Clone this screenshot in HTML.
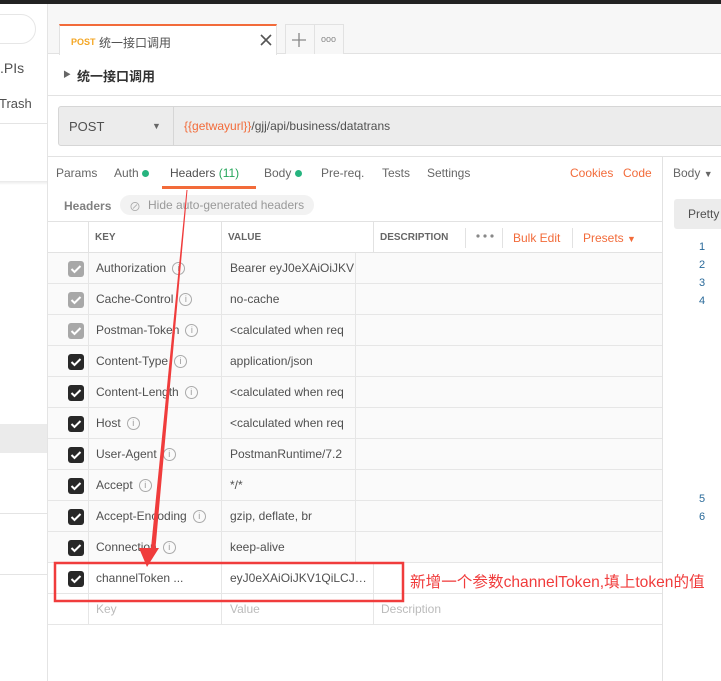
<!DOCTYPE html>
<html><head><meta charset="utf-8"><style>
*{margin:0;padding:0;box-sizing:border-box}
body{width:721px;height:681px;overflow:hidden;background:#fff;font-family:"Liberation Sans","Noto Sans CJK SC",sans-serif;font-size:12px;color:#505050;position:relative}
.a{position:absolute}
.t{position:absolute;white-space:nowrap}
.row{position:absolute;left:48px;width:614px;height:31px;border-bottom:1px solid #e6e6e6;background:#fafafa}
.cb{position:absolute;left:20px;top:8px;width:16px;height:16px;border-radius:3px;background:#282828}
.cb.g{background:#a8a8a8}
.cb svg{position:absolute;left:2px;top:3px}
.k{position:absolute;left:48px;top:8px;font-size:12px;color:#505050;white-space:nowrap}
.v{position:absolute;left:182px;top:8px;font-size:12px;color:#505050;white-space:nowrap}
.i{display:inline-block;width:13px;height:13px;border:1px solid #aaa;border-radius:50%;font-size:9px;line-height:11px;text-align:center;color:#999;vertical-align:1px;margin-left:6px}
.vl{position:absolute;top:0;width:1px;height:31px;background:#e6e6e6}
.ln{position:absolute;left:699px;color:#2a6a9a;font-size:11px}
</style></head><body>
<div class="a" style="left:0;top:0;width:721px;height:4px;background:#222"></div>
<div class="a" style="left:0;top:4px;width:47px;height:677px;background:#fff"></div>
<div class="a" style="left:47px;top:4px;width:1px;height:677px;background:#e4e4e4"></div>
<div class="a" style="left:-20px;top:14px;width:56px;height:30px;border:1px solid #e6e6e6;border-radius:15px;background:#fff"></div>
<div class="t" style="left:0;top:60px;font-size:14px;color:#505050">.PIs</div>
<div class="t" style="left:-1px;top:96px;font-size:13px;color:#505050">Trash</div>
<div class="a" style="left:0;top:123px;width:47px;height:1px;background:#e4e4e4"></div>
<div class="a" style="left:0;top:181px;width:47px;height:4px;background:linear-gradient(#e8e8e8,#fff)"></div>
<div class="a" style="left:0;top:424px;width:47px;height:29px;background:#ebebeb"></div>
<div class="a" style="left:0;top:513px;width:47px;height:1px;background:#e4e4e4"></div>
<div class="a" style="left:0;top:574px;width:47px;height:1px;background:#e4e4e4"></div>
<div class="a" style="left:48px;top:4px;width:673px;height:50px;background:#f7f7f7;border-bottom:1px solid #e2e2e2"></div>
<div class="a" style="left:59px;top:24px;width:218px;height:31px;background:#fff;border-top:2px solid #f26b3a;border-left:1px solid #e2e2e2;border-right:1px solid #e2e2e2"></div>
<div class="t" style="left:71px;top:37px;font-size:9px;font-weight:bold;color:#f4a623">POST</div>
<div class="t" style="left:99px;top:34px;font-size:12px;color:#505050">统一接口调用</div>
<svg class="a" style="left:260px;top:34px" width="12" height="12"><path d="M1 1 L11 11 M11 1 L1 11" stroke="#555" stroke-width="1.6"/></svg>
<div class="a" style="left:285px;top:24px;width:59px;height:30px;border:1px solid #e2e2e2;border-bottom:none;background:#f7f7f7"></div>
<div class="a" style="left:314px;top:24px;width:1px;height:30px;background:#e2e2e2"></div>
<svg class="a" style="left:292px;top:33px" width="14" height="14"><path d="M7 0 V14 M0 7 H14" stroke="#888" stroke-width="1.3"/></svg>
<div class="t" style="left:321px;top:34px;font-size:9px;color:#888">ooo</div>
<div class="t" style="left:63px;top:69px;font-size:8px;color:#666">▶</div>
<div class="t" style="left:77px;top:66px;font-size:13px;font-weight:bold;color:#333">统一接口调用</div>
<div class="a" style="left:48px;top:95px;width:673px;height:1px;background:#e2e2e2"></div>
<div class="a" style="left:58px;top:106px;width:670px;height:40px;background:#ececec;border:1px solid #d6d6d6;border-radius:3px"></div>
<div class="a" style="left:173px;top:107px;width:1px;height:38px;background:#d6d6d6"></div>
<div class="t" style="left:69px;top:119px;font-size:13px;color:#505050">POST</div>
<div class="t" style="left:152px;top:121px;font-size:9px;color:#666">▼</div>
<div class="t" style="left:184px;top:119px;font-size:12px;color:#505050"><span style="color:#f26b3a">{{getwayurl}}</span>/gjj/api/business/datatrans</div>
<div class="a" style="left:48px;top:156px;width:673px;height:1px;background:#e2e2e2"></div>
<div class="t" style="left:56px;top:166px;font-size:12px;color:#666">Params</div>
<div class="t" style="left:114px;top:166px;font-size:12px;color:#666">Auth <span style="display:inline-block;width:7px;height:7px;border-radius:50%;background:#26b47f"></span></div>
<div class="t" style="left:170px;top:166px;font-size:12px;color:#505050">Headers <span style="color:#26a65b">(11)</span></div>
<div class="a" style="left:162px;top:186px;width:94px;height:3px;background:#f26b3a"></div>
<div class="t" style="left:264px;top:166px;font-size:12px;color:#666">Body <span style="display:inline-block;width:7px;height:7px;border-radius:50%;background:#26b47f"></span></div>
<div class="t" style="left:321px;top:166px;font-size:12px;color:#666">Pre-req.</div>
<div class="t" style="left:382px;top:166px;font-size:12px;color:#666">Tests</div>
<div class="t" style="left:427px;top:166px;font-size:12px;color:#666">Settings</div>
<div class="t" style="left:570px;top:166px;font-size:12px;color:#f26b3a">Cookies</div>
<div class="t" style="left:623px;top:166px;font-size:12px;color:#f26b3a">Code</div>
<div class="a" style="left:662px;top:156px;width:1px;height:525px;background:#e2e2e2"></div>
<div class="t" style="left:64px;top:199px;font-size:12px;font-weight:bold;color:#808080">Headers</div>
<div class="a" style="left:120px;top:195px;width:194px;height:20px;border-radius:10px;background:#f2f2f2"></div>
<div class="t" style="left:129px;top:198px;font-size:12px;color:#aaa">⊘</div>
<div class="t" style="left:148px;top:198px;font-size:12px;color:#999">Hide auto-generated headers</div>
<div class="a" style="left:48px;top:221px;width:614px;height:32px;border-top:1px solid #e2e2e2;border-bottom:1px solid #e2e2e2;background:#fff"></div>
<div class="a" style="left:88px;top:221px;width:1px;height:32px;background:#e2e2e2"></div>
<div class="a" style="left:221px;top:221px;width:1px;height:32px;background:#e2e2e2"></div>
<div class="a" style="left:373px;top:221px;width:1px;height:32px;background:#e2e2e2"></div>
<div class="a" style="left:465px;top:228px;width:1px;height:20px;background:#e2e2e2"></div>
<div class="a" style="left:502px;top:228px;width:1px;height:20px;background:#e2e2e2"></div>
<div class="a" style="left:572px;top:228px;width:1px;height:20px;background:#e2e2e2"></div>
<div class="t" style="left:95px;top:232px;font-size:10px;font-weight:bold;color:#666">KEY</div>
<div class="t" style="left:228px;top:232px;font-size:10px;font-weight:bold;color:#666">VALUE</div>
<div class="t" style="left:380px;top:232px;font-size:10px;font-weight:bold;color:#666">DESCRIPTION</div>
<svg class="a" style="left:476px;top:234px" width="18" height="4"><circle cx="2" cy="2" r="1.6" fill="#888"/><circle cx="9" cy="2" r="1.6" fill="#888"/><circle cx="16" cy="2" r="1.6" fill="#888"/></svg>
<div class="t" style="left:513px;top:231px;font-size:12px;color:#f26b3a">Bulk Edit</div>
<div class="t" style="left:583px;top:231px;font-size:12px;color:#f26b3a">Presets <span style="font-size:9px">▼</span></div>

<div class="row" style="top:253px"><div class="cb g"><svg width="12" height="10"><path d="M1.5 5 L4.5 8 L10.5 2" stroke="#fff" stroke-width="2" fill="none"/></svg></div><div class="k">Authorization<span class="i">i</span></div><div class="v">Bearer eyJ0eXAiOiJKV</div><div class="vl" style="left:40px"></div><div class="vl" style="left:173px"></div><div class="vl" style="left:307px"></div></div>
<div class="row" style="top:284px"><div class="cb g"><svg width="12" height="10"><path d="M1.5 5 L4.5 8 L10.5 2" stroke="#fff" stroke-width="2" fill="none"/></svg></div><div class="k">Cache-Control<span class="i">i</span></div><div class="v">no-cache</div><div class="vl" style="left:40px"></div><div class="vl" style="left:173px"></div><div class="vl" style="left:307px"></div></div>
<div class="row" style="top:315px"><div class="cb g"><svg width="12" height="10"><path d="M1.5 5 L4.5 8 L10.5 2" stroke="#fff" stroke-width="2" fill="none"/></svg></div><div class="k">Postman-Token<span class="i">i</span></div><div class="v">&lt;calculated when req</div><div class="vl" style="left:40px"></div><div class="vl" style="left:173px"></div><div class="vl" style="left:307px"></div></div>
<div class="row" style="top:346px"><div class="cb"><svg width="12" height="10"><path d="M1.5 5 L4.5 8 L10.5 2" stroke="#fff" stroke-width="2" fill="none"/></svg></div><div class="k">Content-Type<span class="i">i</span></div><div class="v">application/json</div><div class="vl" style="left:40px"></div><div class="vl" style="left:173px"></div><div class="vl" style="left:307px"></div></div>
<div class="row" style="top:377px"><div class="cb"><svg width="12" height="10"><path d="M1.5 5 L4.5 8 L10.5 2" stroke="#fff" stroke-width="2" fill="none"/></svg></div><div class="k">Content-Length<span class="i">i</span></div><div class="v">&lt;calculated when req</div><div class="vl" style="left:40px"></div><div class="vl" style="left:173px"></div><div class="vl" style="left:307px"></div></div>
<div class="row" style="top:408px"><div class="cb"><svg width="12" height="10"><path d="M1.5 5 L4.5 8 L10.5 2" stroke="#fff" stroke-width="2" fill="none"/></svg></div><div class="k">Host<span class="i">i</span></div><div class="v">&lt;calculated when req</div><div class="vl" style="left:40px"></div><div class="vl" style="left:173px"></div><div class="vl" style="left:307px"></div></div>
<div class="row" style="top:439px"><div class="cb"><svg width="12" height="10"><path d="M1.5 5 L4.5 8 L10.5 2" stroke="#fff" stroke-width="2" fill="none"/></svg></div><div class="k">User-Agent<span class="i">i</span></div><div class="v">PostmanRuntime/7.2</div><div class="vl" style="left:40px"></div><div class="vl" style="left:173px"></div><div class="vl" style="left:307px"></div></div>
<div class="row" style="top:470px"><div class="cb"><svg width="12" height="10"><path d="M1.5 5 L4.5 8 L10.5 2" stroke="#fff" stroke-width="2" fill="none"/></svg></div><div class="k">Accept<span class="i">i</span></div><div class="v">*/*</div><div class="vl" style="left:40px"></div><div class="vl" style="left:173px"></div><div class="vl" style="left:307px"></div></div>
<div class="row" style="top:501px"><div class="cb"><svg width="12" height="10"><path d="M1.5 5 L4.5 8 L10.5 2" stroke="#fff" stroke-width="2" fill="none"/></svg></div><div class="k">Accept-Encoding<span class="i">i</span></div><div class="v">gzip, deflate, br</div><div class="vl" style="left:40px"></div><div class="vl" style="left:173px"></div><div class="vl" style="left:307px"></div></div>
<div class="row" style="top:532px"><div class="cb"><svg width="12" height="10"><path d="M1.5 5 L4.5 8 L10.5 2" stroke="#fff" stroke-width="2" fill="none"/></svg></div><div class="k">Connection<span class="i">i</span></div><div class="v">keep-alive</div><div class="vl" style="left:40px"></div><div class="vl" style="left:173px"></div><div class="vl" style="left:307px"></div></div>
<div class="row" style="top:563px;background:#fff"><div class="cb"><svg width="12" height="10"><path d="M1.5 5 L4.5 8 L10.5 2" stroke="#fff" stroke-width="2" fill="none"/></svg></div><div class="k">channelToken ...</div><div class="v" style="width:138px;overflow:hidden;text-overflow:ellipsis">eyJ0eXAiOiJKV1QiLCJhbGciOiJIUzI1NiJ9</div><div class="vl" style="left:40px"></div><div class="vl" style="left:173px"></div><div class="vl" style="left:325px"></div></div>
<div class="row" style="top:594px;background:#fff"><div class="k" style="color:#bbb">Key</div><div class="v" style="color:#bbb">Value</div><div class="v" style="left:333px;color:#bbb">Description</div><div class="vl" style="left:40px"></div><div class="vl" style="left:173px"></div><div class="vl" style="left:325px"></div></div>
<div class="t" style="left:673px;top:166px;font-size:12px;color:#666">Body <span style="font-size:9px">▼</span></div>
<div class="a" style="left:674px;top:199px;width:60px;height:30px;border-radius:3px;background:#ececec"></div>
<div class="t" style="left:688px;top:207px;font-size:12px;color:#505050">Pretty</div>
<div class="ln" style="top:241px">1</div><div class="ln" style="top:259px">2</div><div class="ln" style="top:277px">3</div><div class="ln" style="top:295px">4</div>
<div class="ln" style="top:493px">5</div><div class="ln" style="top:511px">6</div>
<svg class="a" style="left:0;top:0" width="721" height="681">
<polygon points="186.5,190 187.5,190 155.5,548 151,548" fill="#f03c3c"/>
<polygon points="139,548 159,548 147,567" fill="#f03c3c"/>
<rect x="55" y="563" width="348" height="38" fill="none" stroke="#f03c3c" stroke-width="2.5"/>
</svg>
<div class="t" style="left:410px;top:570px;font-size:15.6px;color:#f03c3c">新增一个参数channelToken,填上token的值</div>
</body></html>
